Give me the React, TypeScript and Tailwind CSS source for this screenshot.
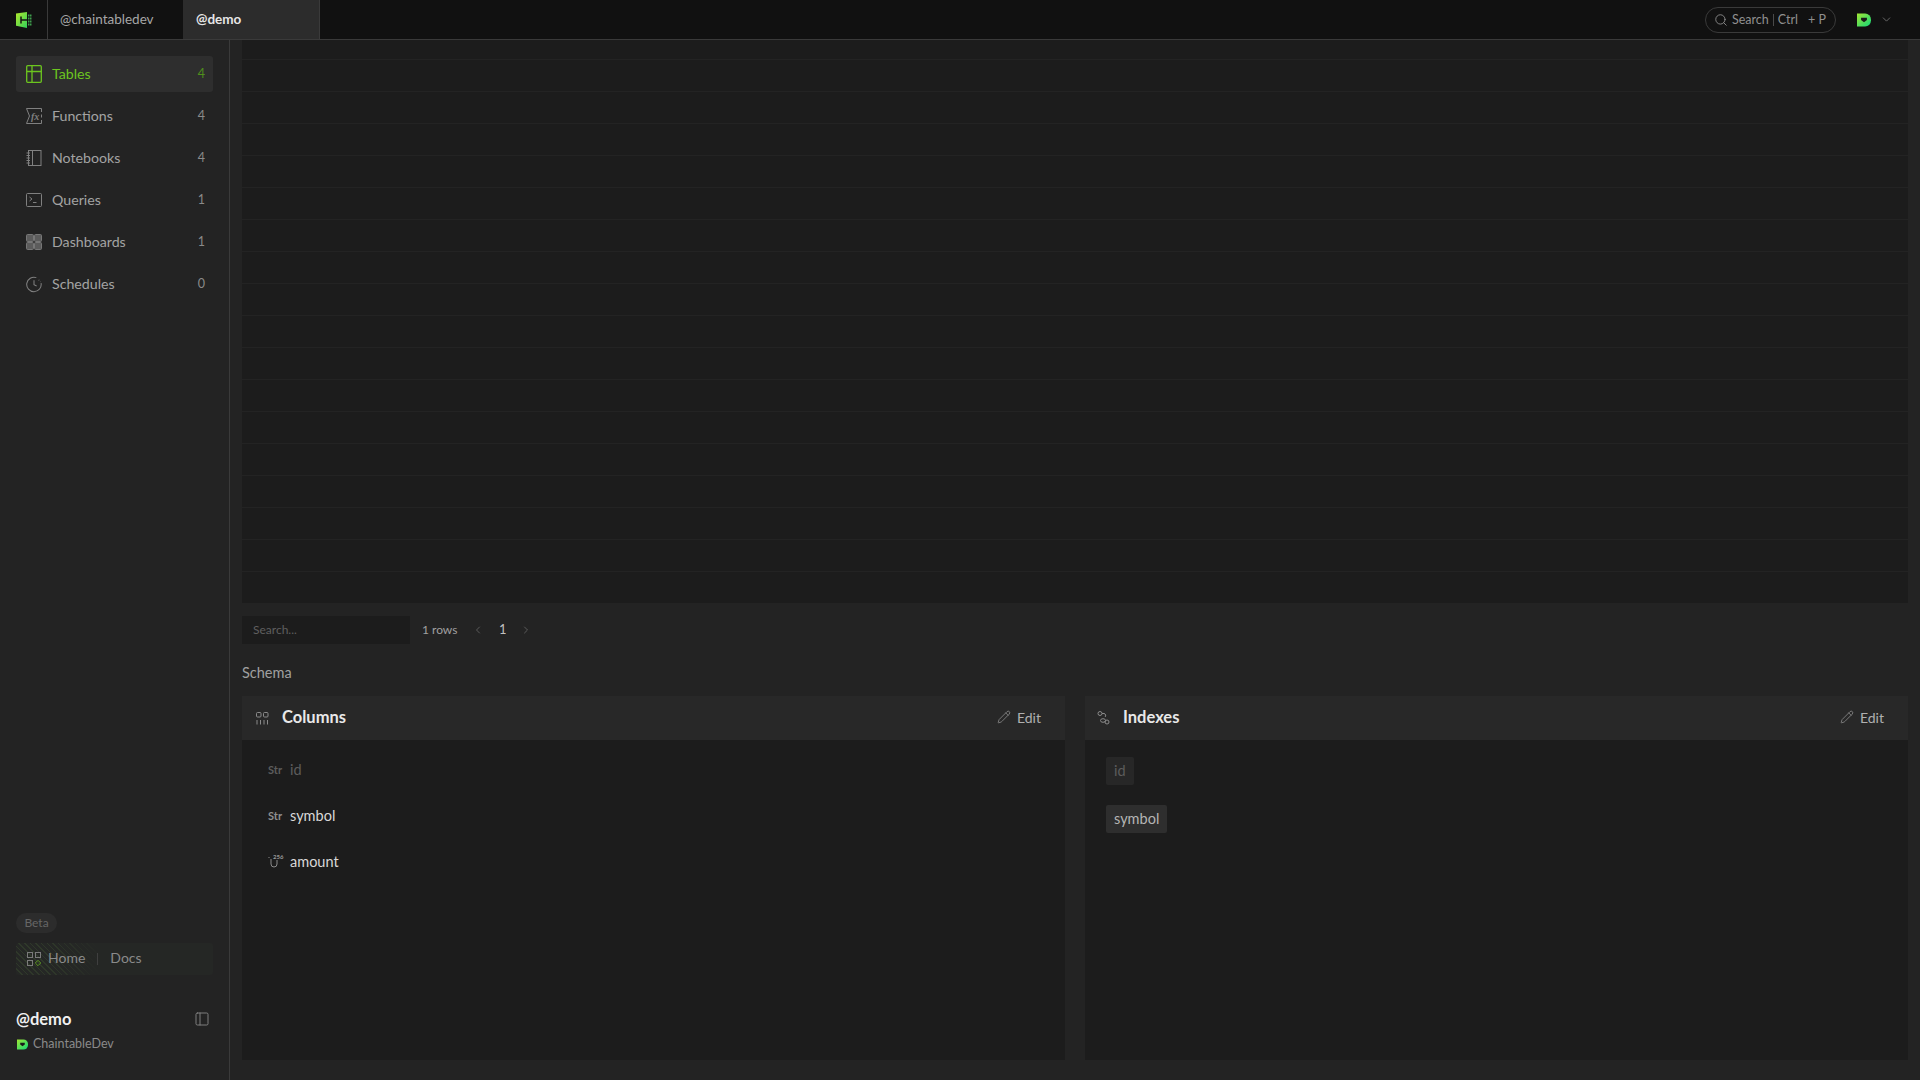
import { ChevronDown, ChevronLeft, ChevronRight, PanelLeft, Pencil, Search } from "lucide-react";
import type { ReactNode } from "react";

const font = "font-['Lato','Noto_Sans',sans-serif]";

const Logo = () => (
  <svg width="16" height="16" viewBox="0 0 16 16" fill="none">
    <defs>
      <linearGradient id="logoFill" x1="0" y1="0" x2="1" y2="1">
        <stop offset="0" stopColor="#b4e82c" />
        <stop offset="1" stopColor="#2fd05a" />
      </linearGradient>
    </defs>
    <path d="M0 1.500 11 0v16L0 13.800Z" fill="url(#logoFill)" />
    <path d="M11 8H5M5 4.500v7" stroke="#151515" strokeWidth="1.500" />
    <path d="M12 3.500h4M12 6.500h4M12 9.500h4M12 12.500h4" stroke="#3f9d4d" strokeWidth="1.800" strokeDasharray="1.500 .5" />
  </svg>
);

const DLogo = ({ size }: { size: number }) => (
  <svg width={size} height={size} viewBox="0 0 12 12">
    <defs>
      <linearGradient id={`dFill${size}`} x1="0" y1="0" x2="1" y2="1">
        <stop offset="0" stopColor="#a3e635" />
        <stop offset="1" stopColor="#10d878" />
      </linearGradient>
    </defs>
    <path d="M0 .5h7a5 5 0 0 1 5 5v1a5 5 0 0 1-5 5H0Z" fill={`url(#dFill${size})`} />
    <path d="M3.500 4h5v2L6 8 3.500 6Z" fill="#1a1a1a" />
  </svg>
);

const TableIcon = () => (
  <svg width="16" height="18" viewBox="0 0 16 18" fill="none" stroke="currentColor" strokeWidth="1.300">
    <rect x=".7" y=".7" width="14.600" height="16.600" rx="1" />
    <path d="M.7 6.500h14.600M6 .7v16.600" />
  </svg>
);

const FunctionIcon = () => (
  <svg width="16" height="16" viewBox="0 0 16 16" fill="none" stroke="currentColor" strokeWidth="1">
    <path d="M15.500 4V.5H.5L3.500 8l-3 7.500h15V12M15.500 6.500v3" />
    <text x="5" y="11.500" fontSize="10" fontStyle="italic" fontWeight="700" fill="currentColor" stroke="none" fontFamily="Liberation Serif, serif">
      fx
    </text>
  </svg>
);

const NotebookIcon = () => (
  <svg width="16" height="16" viewBox="0 0 16 16" fill="none" stroke="currentColor" strokeWidth="1">
    <rect x="2.500" y=".5" width="12.500" height="15" />
    <path d="M6.500.5v15M.5 3h3.500M.5 5.500h3.500M.5 8h3.500M.5 10.500h3.500M.5 13h3.500" />
  </svg>
);

const TerminalIcon = () => (
  <svg width="16" height="14" viewBox="0 0 16 14" fill="none" stroke="currentColor" strokeWidth="1">
    <rect x=".5" y=".5" width="15" height="13" rx="1" />
    <path d="m3.500 4 2.500 2-2.500 2M7 9.500h3.500" />
  </svg>
);

const DashboardIcon = () => (
  <svg width="16" height="16" viewBox="0 0 16 16" fill="#5c5c5c" stroke="#777777" strokeWidth="1">
    <rect x=".5" y=".5" width="7" height="7" rx="1" />
    <rect x="8.500" y=".5" width="7" height="7" rx="1" />
    <rect x=".5" y="8.500" width="7" height="7" rx="1" />
    <rect x="8.500" y="8.500" width="7" height="7" rx="1" />
  </svg>
);

const ClockIcon = () => (
  <svg width="17" height="17" viewBox="0 0 17 17" fill="none" stroke="currentColor" strokeWidth="1.100">
    <path d="M11 1.200A7.700 7.700 0 1 0 16 7" />
    <path d="M8.500 4v4.700l2.800 1.300" />
    <path d="M13.500 3.500l.5.500M15.300 5.400l.2.200" />
  </svg>
);

const HomeIcon = () => (
  <svg width="14" height="14" viewBox="0 0 14 14" fill="none" stroke="#7a7a7a" strokeWidth="1">
    <rect x=".5" y=".5" width="5" height="5" />
    <rect x="8.500" y=".5" width="5" height="5" />
    <rect x=".5" y="8.500" width="5" height="5" />
    <path d="m11 8.300 2.700 2.700-2.700 2.700L8.300 11Z" stroke="#5f9a22" />
  </svg>
);

const ColumnsIcon = () => (
  <svg width="13" height="13" viewBox="0 0 13 13" fill="none" stroke="#8a8a8a" strokeWidth="1">
    <rect x=".5" y=".5" width="4.500" height="4.500" rx="1" />
    <rect x="7.500" y=".5" width="4.500" height="4.500" rx="1" />
    <path d="M1 8v4.500M4.500 8v4.500M8 8v4.500M11.500 8v4.500" />
  </svg>
);

const IndexIcon = () => (
  <svg width="13" height="14" viewBox="0 0 13 14" fill="none" stroke="#8a8a8a" strokeWidth="1">
    <circle cx="3" cy="2.500" r="2" />
    <circle cx="10" cy="11" r="2" />
    <ellipse cx="6" cy="9.500" rx="2.500" ry="1.800" />
    <path d="M5 2.500h2a2 2 0 0 1 1 3.500" />
  </svg>
);

const UintIcon = () => (
  <span className="relative h-4 w-4">
    <svg width="12" height="13" viewBox="0 0 12 13" fill="none" stroke="#8a8a8a" strokeWidth="1" className="absolute left-0 top-[2px]">
      <path d="M1 1v1M3 3v5a3 3 0 0 0 6 0V4" />
    </svg>
    <span className="absolute left-[5px] top-[-1px] text-[6px] leading-[8px] text-[#9a9a9a]">256</span>
  </span>
);

const navItems: { label: string; count: number; icon: ReactNode; active?: boolean }[] = [
  { label: "Tables", count: 4, icon: <TableIcon />, active: true },
  { label: "Functions", count: 4, icon: <FunctionIcon /> },
  { label: "Notebooks", count: 4, icon: <NotebookIcon /> },
  { label: "Queries", count: 1, icon: <TerminalIcon /> },
  { label: "Dashboards", count: 1, icon: <DashboardIcon /> },
  { label: "Schedules", count: 0, icon: <ClockIcon /> },
];

const TopBar = () => (
  <header className="flex h-10 shrink-0 border-b border-[#3a3a3a] bg-[#111111]">
    <div className="flex w-12 items-center justify-center border-r border-[#3a3a3a]">
      <Logo />
    </div>
    <div className="flex w-[135px] items-center pl-3 text-[13.5px] text-[#a6a6a6]">@chaintabledev</div>
    <div className="flex w-[137px] items-center border-r border-[#3a3a3a] bg-[#2c2c2c] pl-[13px] text-[13.5px] font-bold text-[#e6e6e6]">
      @demo
    </div>
    <div className="ml-auto flex items-center pr-[27px]">
      <div className="flex h-[26px] w-[131px] items-center rounded-full border border-[#3a3a3a] pl-2 text-[12.5px] text-[#8f8f8f]">
        <Search size={14} strokeWidth={1.500} className="mr-[4px] shrink-0" />
        <span className="mt-px">Search</span>
        <span className="mx-[4px] h-3 w-px bg-[#4a4a4a]" />
        <span className="mt-px">Ctrl</span>
        <span className="ml-[10px] mt-px">+ P</span>
      </div>
      <div className="ml-[21px]">
        <DLogo size={14} />
      </div>
      <ChevronDown size={13} strokeWidth={1.500} className="ml-[9px] text-[#7a7a7a]" />
    </div>
  </header>
);

const Sidebar = () => (
  <aside className="flex w-[230px] shrink-0 flex-col border-r border-[#3a3a3a] bg-[#232323] px-4 pt-4">
    <nav className="flex flex-col gap-[6px]">
      {navItems.map((item) => (
        <div
          key={item.label}
          className={`flex h-9 items-center rounded-[3px] pl-[10px] pr-2 ${
            item.active ? "bg-[#2e2e2e] text-[#6cc51f]" : "text-[#a3a3a3]"
          }`}
        >
          <span className={`flex w-4 justify-center ${item.active ? "" : "text-[#808080]"}`}>{item.icon}</span>
          <span className="mb-px ml-[10px] text-[14.2px]">{item.label}</span>
          <span className={`ml-auto text-[12.5px] ${item.active ? "text-[#4f8f1c]" : "text-[#8a8a8a]"}`}>
            {item.count}
          </span>
        </div>
      ))}
    </nav>

    <div className="mt-auto">
      <span className="flex h-5 w-[41px] items-center justify-center rounded-full bg-[#2c2c2c] text-[12px] text-[#666666]">
        Beta
      </span>
      <div className="mt-[10px] flex h-8 items-center rounded-[3px] bg-[#252725] bg-[linear-gradient(to_right,transparent_40%,#252725_100%),repeating-linear-gradient(45deg,#2f382a_0,#2f382a_1px,transparent_1px,transparent_4px)] bg-[length:84px_100%] bg-no-repeat pl-[11px] text-[14px] text-[#8a8a8a]">
        <HomeIcon />
        <span className="mb-[3px] ml-[7px]">Home</span>
        <span className="mx-3 h-3 w-px bg-[#3f3f3f]" />
        <span className="mb-[3px]">Docs</span>
      </div>
      <div className="mt-[32px] flex items-center justify-between pr-[3px]">
        <span className="text-[16.5px] leading-6 font-bold text-[#f0f0f0]">@demo</span>
        <PanelLeft size={16} strokeWidth={1.500} className="text-[#7f7f7f]" />
      </div>
      <div className="mb-[26px] mt-[3px] flex items-center pl-px text-[12.5px] leading-5 text-[#8a8a8a]">
        <DLogo size={11} />
        <span className="ml-[5px]">ChaintableDev</span>
      </div>
    </div>
  </aside>
);

const rowCount = Array.from({ length: 17 });

const DataTable = () => (
  <div className="flex h-[563px] flex-col bg-[#1c1c1c]">
    <div className="h-5 shrink-0 border-b border-[#232323]" />
    {rowCount.map((_, i) => (
      <div key={i} className="h-8 shrink-0 border-b border-[#232323] last:border-b-0" />
    ))}
  </div>
);

const Pager = () => (
  <div className="mt-[13px] flex h-7 items-center text-[12px] text-[#a0a0a0]">
    <div className="flex h-7 w-[168px] items-center bg-[#1c1c1c] pl-[11px] text-[#5f5f5f]">Search...</div>
    <span className="ml-3 w-[44px]">1 rows</span>
    <ChevronLeft size={12} className="ml-[6px] text-[#5a5a5a]" />
    <span className="ml-[15px] text-[13px] font-normal text-[#c0c0c0]">1</span>
    <ChevronRight size={12} className="ml-[13px] text-[#5a5a5a]" />
  </div>
);

const Card = ({ icon, title, indent, children }: { icon: ReactNode; title: string; indent: string; children: ReactNode }) => (
  <section className="flex flex-col bg-[#1c1c1c]">
    <div className={`flex h-11 shrink-0 items-center bg-[#282828] pb-[2px] pr-[24px] ${indent}`}>
      <span className="mt-[2px] flex w-[14px] justify-center">{icon}</span>
      <h3 className="ml-[13px] text-[16.5px] font-bold text-[#e8e8e8]">{title}</h3>
      <button className="ml-auto flex items-center text-[14px] text-[#b0b0b0]">
        <Pencil size={14} strokeWidth={1.400} className="mr-[6px] text-[#8a8a8a]" />
        Edit
      </button>
    </div>
    {children}
  </section>
);

const ColumnRow = ({ type, name, dim }: { type: ReactNode; name: string; dim?: boolean }) => (
  <div className={`flex h-[46px] items-center pl-[26px] text-[14.5px] ${dim ? "text-[#5c5c5c]" : "text-[#d8d8d8]"}`}>
    <span className={`flex w-[22px] text-[11px] font-bold ${dim ? "text-[#5c5c5c]" : "text-[#8f8f8f]"}`}>{type}</span>
    {name}
  </div>
);

const Chip = ({ name, dim }: { name: string; dim?: boolean }) => (
  <span
    className={`flex h-7 w-fit items-center rounded-[2px] px-2 text-[14.5px] ${
      dim ? "bg-[#272727] text-[#5c5c5c]" : "bg-[#2e2e2e] text-[#b4b4b4]"
    }`}
  >
    {name}
  </span>
);

export default function App() {
  return (
    <div className={`flex h-screen flex-col overflow-hidden bg-[#232323] ${font}`}>
      <TopBar />
      <div className="flex min-h-0 flex-1">
        <Sidebar />
        <main className="flex min-w-0 flex-1 flex-col px-3 pb-5">
          <DataTable />
          <Pager />
          <h2 className="mt-[19px] text-[14.5px] leading-5 text-[#a0a0a0]">Schema</h2>
          <div className="mt-[13px] grid min-h-0 flex-1 grid-cols-2 gap-5">
            <Card icon={<ColumnsIcon />} title="Columns" indent="pl-[13px]">
              <div className="pt-[7px]">
                <ColumnRow type="Str" name="id" dim />
                <ColumnRow type="Str" name="symbol" />
                <ColumnRow type={<UintIcon />} name="amount" />
              </div>
            </Card>
            <Card icon={<IndexIcon />} title="Indexes" indent="pl-[11px]">
              <div className="flex flex-col gap-5 pl-[21px] pt-[17px]">
                <Chip name="id" dim />
                <Chip name="symbol" />
              </div>
            </Card>
          </div>
        </main>
      </div>
    </div>
  );
}
